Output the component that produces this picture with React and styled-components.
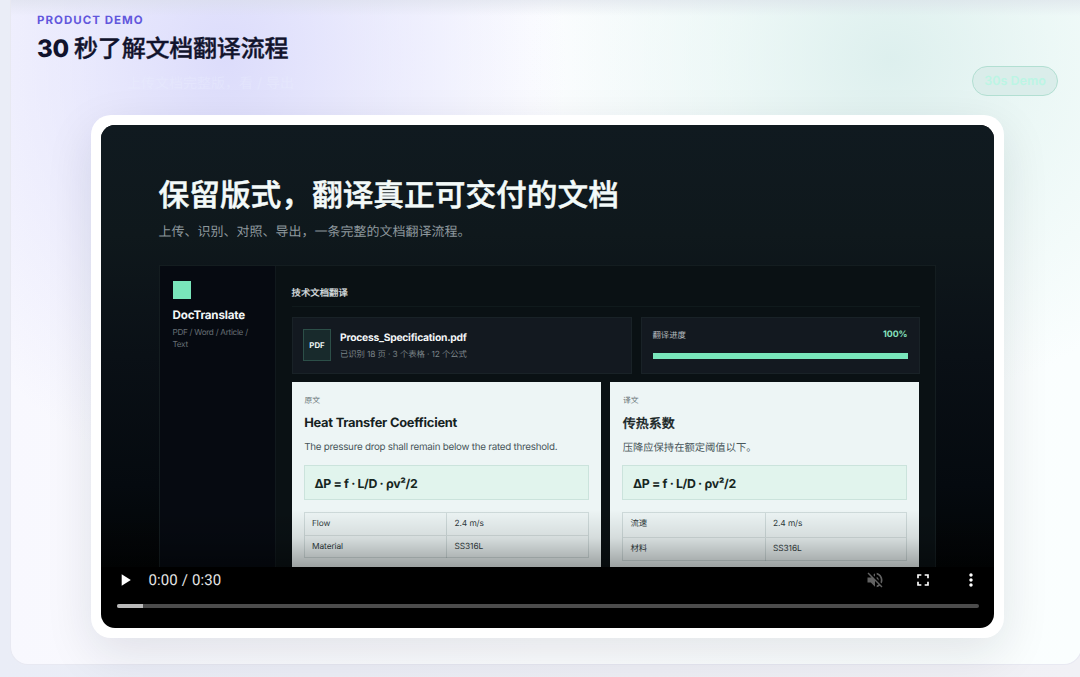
import React from 'react';
import styled, { createGlobalStyle } from 'styled-components';
import { MdPlayArrow, MdVolumeOff, MdFullscreen, MdMoreVert } from 'react-icons/md';

const panes = [
  {
    label: '原文',
    title: 'Heat Transfer Coefficient',
    text: 'The pressure drop shall remain below the rated threshold.',
    rowHeight: 22,
    rows: [['Flow', '2.4 m/s'], ['Material', 'SS316L']]
  },
  {
    label: '译文',
    title: '传热系数',
    text: '压降应保持在额定阈值以下。',
    cjk: true,
    rowHeight: 23.5,
    rows: [['流速', '2.4 m/s'], ['材料', 'SS316L']]
  }
];

const Pane = ({ pane }) => (
  <PaneBox>
    <PaneLabel>{pane.label}</PaneLabel>
    <PaneTitle $cjk={pane.cjk}>{pane.title}</PaneTitle>
    <PaneText $cjk={pane.cjk}>{pane.text}</PaneText>
    <Formula>ΔP = f · L/D · ρv²/2</Formula>
    <Table>
      {pane.rows.map(([name, value]) => (
        <TableRow key={name} $height={pane.rowHeight}>
          <Cell>{name}</Cell>
          <Cell>{value}</Cell>
        </TableRow>
      ))}
    </Table>
  </PaneBox>
);

export default function App() {
  return (
    <Page>
      <GlobalStyle />
      <Card>
        <Header>
          <div>
            <Eyebrow>PRODUCT DEMO</Eyebrow>
            <Title>30 <Cjk>秒了解文档翻译流程</Cjk></Title>
            <Hint>上传文档完整版，看 / 导出</Hint>
          </div>
          <Badge>30s Demo</Badge>
        </Header>
        <Frame>
          <Video>
            <Scene>
              <SceneTitle>保留版式，翻译真正可交付的文档</SceneTitle>
              <SceneText>上传、识别、对照、导出，一条完整的文档翻译流程。</SceneText>
              <Window>
                <Sidebar>
                  <Logo />
                  <Brand>DocTranslate</Brand>
                  <Formats>PDF / Word / Article / Text</Formats>
                </Sidebar>
                <Main>
                  <Topbar>技术文档翻译</Topbar>
                  <Summary>
                    <FileBox>
                      <FileIcon>PDF</FileIcon>
                      <div>
                        <FileName>Process_Specification.pdf</FileName>
                        <FileMeta>已识别 18 页 · 3 个表格 · 12 个公式</FileMeta>
                      </div>
                    </FileBox>
                    <ProgressBox>
                      <ProgressHead>
                        <span>翻译进度</span>
                        <Percent>100%</Percent>
                      </ProgressHead>
                      <Bar />
                    </ProgressBox>
                  </Summary>
                  <Panes>
                    {panes.map(pane => <Pane key={pane.label} pane={pane} />)}
                  </Panes>
                </Main>
              </Window>
              <Shade />
            </Scene>
            <Controls>
              <MdPlayArrow size={20} />
              <Time>0:00 / 0:30</Time>
              <Buttons>
                <Muted><MdVolumeOff size={20} /></Muted>
                <MdFullscreen size={20} />
                <MdMoreVert size={20} />
              </Buttons>
            </Controls>
            <Track><Played /></Track>
          </Video>
        </Frame>
      </Card>
    </Page>
  );
}

const GlobalStyle = createGlobalStyle`
  * {
    box-sizing: border-box;
  }

  body {
    margin: 0;
    overflow: hidden;
    background: #ebedf5;
    font-family: Inter, "Noto Sans CJK SC", sans-serif;
    text-rendering: geometricPrecision;
  }
`;

const Page = styled.div`
  width: 1080px;
  height: 677px;
  padding-left: 10px;
  overflow: hidden;
  background: linear-gradient(90deg, #eaedf7, #eeeff5 60%, #f1f1f6);
`;

const Card = styled.section`
  width: 1072px;
  height: 665px;
  border: 1px solid #e8e9f2;
  border-top: 0;
  border-radius: 0 0 18px 18px;
  background:
    linear-gradient(180deg, rgba(215, 220, 230, 0.5), rgba(215, 220, 230, 0) 16px),
    radial-gradient(ellipse 340px 420px at 215px 60px, rgba(217, 217, 251, 0.9), rgba(224, 224, 252, 0.65) 40%, rgba(240, 240, 255, 0) 100%),
    radial-gradient(ellipse 360px 340px at 880px 60px, rgba(218, 238, 236, 0.9), rgba(227, 244, 241, 0.6) 45%, rgba(242, 251, 249, 0) 100%),
    linear-gradient(90deg, #f8f8fe, #fcfdff 50%, #fafefe);
`;

const Header = styled.header`
  height: 115px;
  padding: 13px 23px 0 26px;
  display: flex;
  justify-content: space-between;
`;

const Eyebrow = styled.div`
  color: #6257dc;
  font-size: 11.5px;
  font-weight: 700;
  line-height: 15px;
  letter-spacing: 1.02px;
`;

const Title = styled.h1`
  margin: 5px 0 0;
  color: #11132c;
  font-size: 24px;
  font-weight: 800;
  line-height: 32px;
  letter-spacing: -0.2px;
  white-space: nowrap;
`;

const Cjk = styled.span`
  font-weight: 500;
  -webkit-text-stroke: 0.4px;
`;

const Hint = styled.p`
  margin: 9px 0 0 90px;
  color: rgba(236, 240, 255, 0.35);
  font-size: 14px;
  line-height: 20px;
`;

const Badge = styled.div`
  width: 86px;
  height: 30px;
  margin-top: 53px;
  border: 1px solid #b2dfd2;
  border-radius: 15px;
  background: #daedea;
  color: #bcf5e4;
  font-size: 12.5px;
  font-weight: 600;
  line-height: 29px;
  text-align: center;
`;

const Frame = styled.div`
  width: 913px;
  height: 523px;
  margin-left: 80px;
  padding: 10px 10px 10px 9.5px;
  border-radius: 20px;
  background: #fff;
  box-shadow: 0 16px 48px rgba(15, 23, 42, 0.11);
`;

const Video = styled.div`
  width: 893.5px;
  height: 503px;
  overflow: hidden;
  border-radius: 14px;
  background: #000;
`;

const Scene = styled.div`
  position: relative;
  height: 442px;
  padding: 51px 58px 0;
  overflow: hidden;
  background: linear-gradient(180deg, #101a20 0, #0f181c 110px, #0a1016 230px, #050a0f 360px, #020405 442px);
`;

const SceneTitle = styled.h2`
  margin: 0;
  color: #f3faf9;
  font-size: 30.7px;
  font-weight: 500;
  line-height: 40px;
  white-space: nowrap;
  -webkit-text-stroke: 0.5px;
`;

const SceneText = styled.p`
  margin: 6px 0 0;
  color: #8d979c;
  font-size: 13px;
  line-height: 20px;
`;

const Window = styled.div`
  width: 777px;
  height: 340px;
  margin-top: 23px;
  display: grid;
  grid-template-columns: 116px 1fr;
  border: 1px solid #141d20;
  background: #0a1114;
`;

const Sidebar = styled.aside`
  padding: 15px 13px;
  border-right: 1px solid #11191d;
  background: #060a11;
`;

const Logo = styled.div`
  width: 18px;
  height: 18px;
  background: #79e6bb;
`;

const Brand = styled.div`
  margin-top: 8px;
  color: #f2f6f6;
  font-size: 11.6px;
  font-weight: 700;
  line-height: 16px;
  letter-spacing: -0.15px;
`;

const Formats = styled.div`
  margin-top: 4px;
  color: #666f75;
  font-size: 8.2px;
  line-height: 11.5px;
  letter-spacing: -0.32px;
  word-spacing: 0.1px;
`;

const Main = styled.div`
  padding: 0 15px 0 16px;
`;

const Topbar = styled.div`
  height: 41px;
  padding-top: 20px;
  border-bottom: 1px solid #101a1c;
  color: #d5dcde;
  font-size: 9.4px;
  font-weight: 500;
  line-height: 16px;
  -webkit-text-stroke: 0.2px;
`;

const Summary = styled.div`
  margin-top: 10px;
  display: grid;
  grid-template-columns: 340px 279px;
  gap: 9px;
`;

const SummaryBox = styled.div`
  height: 57px;
  border: 1px solid #192227;
  background: #131920;
`;

const FileBox = styled(SummaryBox)`
  padding: 0 10.5px;
  display: flex;
  align-items: center;
  gap: 9px;
`;

const FileIcon = styled.div`
  width: 28px;
  height: 32px;
  margin-top: -1px;
  border: 1px solid #2c4f48;
  background: #182a2c;
  color: #eef5f4;
  font-size: 7.8px;
  font-weight: 700;
  line-height: 30px;
  text-align: center;
`;

const FileName = styled.div`
  margin-top: 1px;
  color: #f2f5f6;
  font-size: 10.3px;
  font-weight: 700;
  line-height: 15px;
  letter-spacing: -0.24px;
`;

const FileMeta = styled.div`
  margin-top: 2px;
  color: #7b8388;
  font-size: 8.4px;
  line-height: 14px;
  letter-spacing: -0.12px;
`;

const ProgressBox = styled(SummaryBox)`
  padding: 10px 11px;
`;

const ProgressHead = styled.div`
  display: flex;
  justify-content: space-between;
  color: #b3babd;
  font-size: 8.4px;
  line-height: 16px;
`;

const Percent = styled.span`
  color: #86e3bf;
  font-size: 8.8px;
  font-weight: 700;
  line-height: 14px;
`;

const Bar = styled.div`
  height: 6px;
  margin-top: 9px;
  background: #79e6bb;
`;

const Panes = styled.div`
  margin-top: 8px;
  display: grid;
  grid-template-columns: 309px 309px;
  gap: 9.5px;
`;

const PaneBox = styled.article`
  height: 230px;
  padding: 11px 12px;
  background: #edf5f5;
`;

const PaneLabel = styled.div`
  padding-left: 1px;
  color: #687477;
  font-size: 7.8px;
  line-height: 14px;
`;

const PaneTitle = styled.h3`
  margin: 7px 0 0;
  padding-left: 0.7px;
  color: #16221f;
  font-size: ${props => props.$cjk ? '13px' : '12.9px'};
  font-weight: ${props => props.$cjk ? 500 : 700};
  line-height: 20px;
  letter-spacing: ${props => props.$cjk ? 0 : '-0.25px'};
  -webkit-text-stroke: ${props => props.$cjk ? '0.3px' : 0};
`;

const PaneText = styled.p`
  margin: 5px 0 0;
  padding-left: 0.7px;
  color: #48565a;
  font-size: ${props => props.$cjk ? '10.3px' : '9.8px'};
  line-height: 18px;
  letter-spacing: ${props => props.$cjk ? 0 : '-0.25px'};
`;

const Formula = styled.div`
  height: 35px;
  margin-top: 8px;
  padding-left: 10px;
  border: 1px solid #cbe3dc;
  background: #e1f4ed;
  color: #16261f;
  font-size: 12.3px;
  font-weight: 700;
  line-height: 35px;
  letter-spacing: -0.35px;
`;

const Table = styled.div`
  margin-top: 12px;
  border: 1px solid rgba(90, 115, 115, 0.2);
`;

const TableRow = styled.div`
  height: ${props => props.$height}px;
  display: grid;
  grid-template-columns: 1fr 1fr;
  line-height: ${props => props.$height}px;

  & + & {
    border-top: 1px solid rgba(90, 115, 115, 0.16);
  }
`;

const Cell = styled.div`
  padding-left: 7.5px;
  color: #303b3d;
  font-size: 8.4px;
  letter-spacing: -0.1px;

  & + & {
    border-left: 1px solid rgba(90, 115, 115, 0.2);
  }
`;

// fade laid over the bottom of the scene, behind the player controls
const Shade = styled.div`
  position: absolute;
  right: 0;
  bottom: 0;
  left: 0;
  height: 58px;
  background: linear-gradient(180deg, rgba(0, 0, 0, 0), rgba(0, 0, 0, 0.1) 50%, rgba(0, 0, 0, 0.34));
`;

const Controls = styled.div`
  height: 26px;
  padding: 0 13px 0 14px;
  display: flex;
  align-items: center;
  color: #fff;
`;

const Time = styled.span`
  margin-left: 14px;
  color: #e5e5e5;
  font-family: Roboto, sans-serif;
  font-size: 15px;
  letter-spacing: 0.12px;
`;

const Buttons = styled.div`
  margin-left: auto;
  display: flex;
  gap: 28px;
`;

const Muted = styled.span`
  display: flex;
  color: #626262;
`;

const Track = styled.div`
  height: 4px;
  margin: 11px 15px 0 16px;
  overflow: hidden;
  border-radius: 2px;
  background: #4c4c4c;
`;

const Played = styled.div`
  width: 26px;
  height: 4px;
  background: #bababa;
`;
